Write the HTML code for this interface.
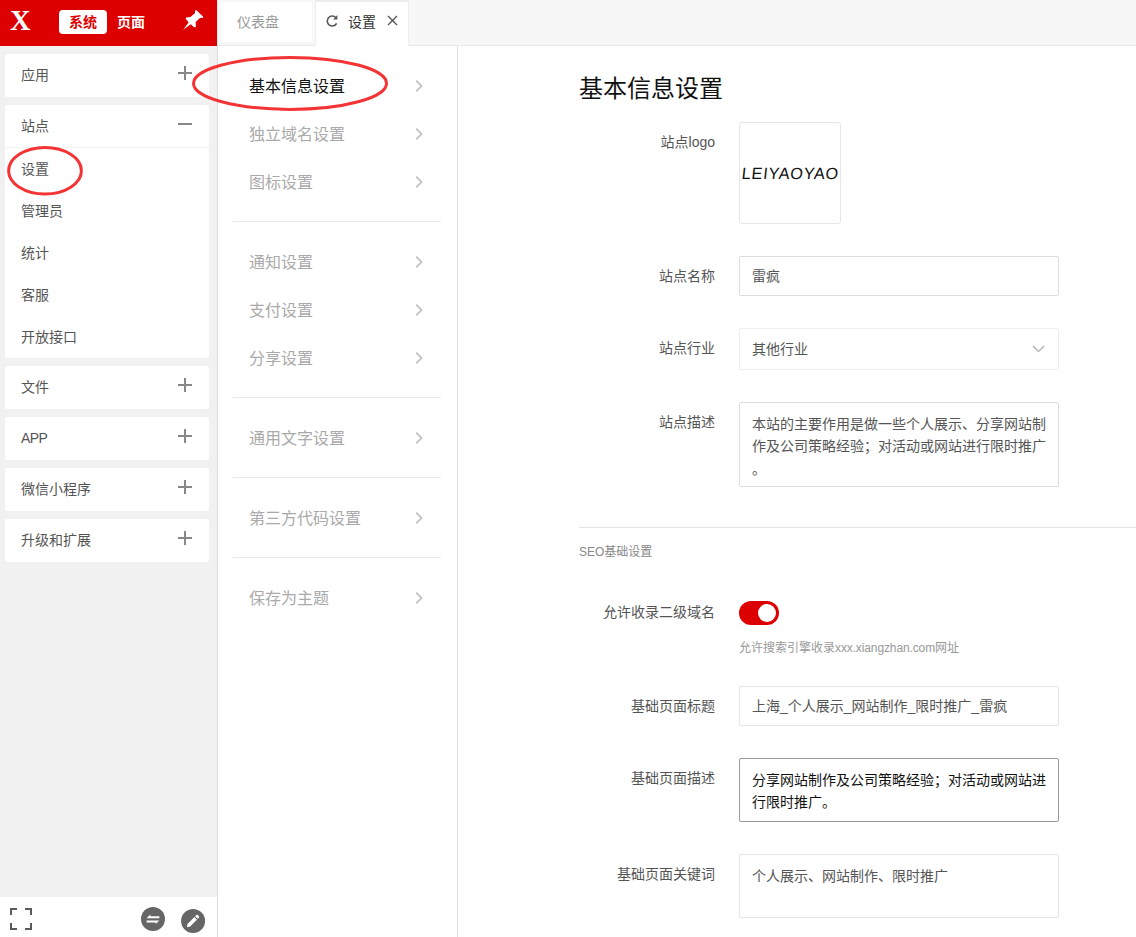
<!DOCTYPE html>
<html lang="zh-CN">
<head>
<meta charset="utf-8">
<title>设置</title>
<style>
*{box-sizing:border-box;margin:0;padding:0}
html,body{width:1136px;height:937px;overflow:hidden;background:#fff}
body{font-family:"Liberation Sans","Noto Sans CJK SC",sans-serif;font-size:14px;color:#555;position:relative}
.abs{position:absolute}
/* sidebar */
#side{position:absolute;left:0;top:0;width:218px;height:937px;background:#f1f1f1;border-right:1px solid #dcdcdc}
#hdr{position:absolute;left:0;top:0;width:217px;height:46px;background:#dc0000}
#logo{position:absolute;left:10px;top:0;font-family:"Liberation Serif",serif;font-weight:bold;font-size:30px;line-height:40px;color:#fff;transform:scaleX(.95);transform-origin:0 0}
#sys{position:absolute;left:59px;top:10px;width:48px;height:24px;background:#fff;border-radius:4px;color:#dc0000;font-weight:bold;font-size:14px;line-height:24px;text-align:center}
#pg{position:absolute;left:117px;top:10px;color:#fff;font-weight:bold;font-size:14px;line-height:24px}
.card{position:absolute;left:5px;width:204px;background:#fff;border-radius:2px}
.card .t{position:absolute;left:16px;font-size:14px;line-height:20px;color:#555;white-space:nowrap}
.pm{position:absolute;left:173px;width:14px;height:14px}
.pm:before{content:"";position:absolute;left:0;top:6px;width:14px;height:2px;background:#888}
.pm.plus:after{content:"";position:absolute;left:6px;top:0;width:2px;height:14px;background:#888}
#foot{position:absolute;left:0;top:897px;width:217px;height:40px;background:#fff}
/* tabs */
#tabs{position:absolute;left:218px;top:0;width:918px;height:46px;background:#f7f7f7;border-bottom:1px solid #e8e8e8}
#tab1{position:absolute;left:3px;top:2px;width:91px;height:40px;background:#fff;color:#999;font-size:14px;line-height:40px;padding-left:16px}
#tab2{position:absolute;left:97px;top:2px;width:94px;height:45px;background:#fff;color:#333;font-size:14px;line-height:42px;border-left:1px solid #eee;border-right:1px solid #eee}
/* menu */
#menu{position:absolute;left:218px;top:46px;width:240px;height:891px;background:#fff;border-right:1px solid #e0e0e0}
.mi{position:absolute;left:31px;font-size:16px;line-height:24px;color:#aaa;white-space:nowrap}
.mi.on{color:#111}
.chev{position:absolute;left:196px;width:9px;height:14px}
.hr{position:absolute;left:15px;width:208px;height:1px;background:#e8e8e8}
/* content */
h1{position:absolute;left:579px;top:71px;font-size:24px;line-height:36px;font-weight:normal;color:#111;white-space:nowrap}
.lb{position:absolute;right:421px;font-size:14px;line-height:20px;color:#555;white-space:nowrap}
.inp{position:absolute;left:739px;width:320px;border:1px solid #ddd;border-radius:2px;background:#fff;padding:0 12px;font-size:14px;color:#555;line-height:38px;white-space:nowrap}
.ta{line-height:22.400px;padding:10px 12px;white-space:nowrap;overflow:hidden}
</style>
</head>
<body>
<div id="side">
  <div id="hdr">
    <div id="logo">X</div>
    <div id="sys">系统</div>
    <div id="pg">页面</div>
    <svg class="abs" style="left:176px;top:4px" width="36" height="32" viewBox="176 4 36 32"><path d="M196.200 10 L203.200 16.800 L203 17.800 L199.900 18 L195.700 22.100 L195.900 26.900 L194.100 27.300 L190.700 24.200 L183.200 29.800 L188.600 22.400 L185.600 18.600 L186.200 17.400 L190.300 17.100 L194.900 13.200 L195.200 10.600 Z" fill="#fff"/></svg>
  </div>

  <div class="card" style="top:54px;height:43px"><span class="t" style="top:11px">应用</span><i class="pm plus" style="top:12px"></i></div>

  <div class="card" style="top:105px;height:253px">
    <span class="t" style="top:11px">站点</span><i class="pm" style="top:12px"></i>
    <div class="abs" style="left:0;top:42px;width:204px;height:1px;background:#f3f3f3"></div>
    <span class="t" style="top:54px">设置</span>
    <span class="t" style="top:96px">管理员</span>
    <span class="t" style="top:138px">统计</span>
    <span class="t" style="top:180px">客服</span>
    <span class="t" style="top:222px">开放接口</span>
  </div>

  <div class="card" style="top:366px;height:43px"><span class="t" style="top:11px">文件</span><i class="pm plus" style="top:12px"></i></div>
  <div class="card" style="top:417px;height:43px"><span class="t" style="top:11px;letter-spacing:-.6px">APP</span><i class="pm plus" style="top:12px"></i></div>
  <div class="card" style="top:468px;height:43px"><span class="t" style="top:11px">微信小程序</span><i class="pm plus" style="top:12px"></i></div>
  <div class="card" style="top:519px;height:43px"><span class="t" style="top:11px">升级和扩展</span><i class="pm plus" style="top:12px"></i></div>

  <div id="foot">
    <svg class="abs" style="left:0;top:0" width="217" height="40" viewBox="0 897 217 40">
      <path d="M11 915V909h6M25 909h6v6M31 923v6h-6M17 929H11v-6" fill="none" stroke="#5a5a5a" stroke-width="2"/>
      <circle cx="153" cy="919" r="12" fill="#666"/>
      <path d="M146.600 918.200L150.300 914.400V916.200H159.400V918.200zM159.400 920.400L155.700 924.100V922.400H146.600V920.400z" fill="#fff"/>
      <circle cx="193.100" cy="920.900" r="12" fill="#666"/>
      <g transform="translate(193.100 920.900) rotate(-45)" fill="#fff"><path d="M-8.600 0L-6.400 -1.800H3.600V1.800H-6.400zM4.700 -1.800H6.400a1 1 0 0 1 1 1V.8a1 1 0 0 1 -1 1H4.700z"/></g>
    </svg>
  </div>
</div>

<div class="abs" style="left:217px;top:0;width:1px;height:46px;background:#ececec"></div>
<div id="tabs">
  <div id="tab1">仪表盘</div>
  <div class="abs" style="left:97px;top:0;width:94px;height:2px;background:#ededed"></div>
  <div id="tab2">
    <svg class="abs" style="left:9px;top:12px" width="14" height="14" viewBox="0 0 13 13" fill="none" stroke="#555" stroke-width="1.500"><path d="M10.800 8.600A4.600 4.600 0 1 1 10.200 3.500"/><path d="M11.500 1v4h-4z" fill="#555" stroke="none"/></svg>
    <span class="abs" style="left:32px;top:-1px">设置</span>
    <svg class="abs" style="left:71px;top:13px" width="11" height="11" viewBox="0 0 11 11" stroke="#555" stroke-width="1.400"><path d="M1 1l9 9M10 1l-9 9"/></svg>
  </div>
</div>

<div id="menu">
  <span class="mi on" style="top:29px">基本信息设置</span><svg class="chev" style="top:33px" viewBox="0 0 9 14" fill="none" stroke="#bdbdbd" stroke-width="1.600"><path d="M2.200 1.600l5.300 5.400-5.300 5.400"/></svg>
  <span class="mi" style="top:77px">独立域名设置</span><svg class="chev" style="top:81px" viewBox="0 0 9 14" fill="none" stroke="#bdbdbd" stroke-width="1.600"><path d="M2.200 1.600l5.300 5.400-5.300 5.400"/></svg>
  <span class="mi" style="top:125px">图标设置</span><svg class="chev" style="top:129px" viewBox="0 0 9 14" fill="none" stroke="#bdbdbd" stroke-width="1.600"><path d="M2.200 1.600l5.300 5.400-5.300 5.400"/></svg>
  <div class="hr" style="top:175px"></div>
  <span class="mi" style="top:205px">通知设置</span><svg class="chev" style="top:209px" viewBox="0 0 9 14" fill="none" stroke="#bdbdbd" stroke-width="1.600"><path d="M2.200 1.600l5.300 5.400-5.300 5.400"/></svg>
  <span class="mi" style="top:253px">支付设置</span><svg class="chev" style="top:257px" viewBox="0 0 9 14" fill="none" stroke="#bdbdbd" stroke-width="1.600"><path d="M2.200 1.600l5.300 5.400-5.300 5.400"/></svg>
  <span class="mi" style="top:301px">分享设置</span><svg class="chev" style="top:305px" viewBox="0 0 9 14" fill="none" stroke="#bdbdbd" stroke-width="1.600"><path d="M2.200 1.600l5.300 5.400-5.300 5.400"/></svg>
  <div class="hr" style="top:351px"></div>
  <span class="mi" style="top:381px">通用文字设置</span><svg class="chev" style="top:385px" viewBox="0 0 9 14" fill="none" stroke="#bdbdbd" stroke-width="1.600"><path d="M2.200 1.600l5.300 5.400-5.300 5.400"/></svg>
  <div class="hr" style="top:431px"></div>
  <span class="mi" style="top:461px">第三方代码设置</span><svg class="chev" style="top:465px" viewBox="0 0 9 14" fill="none" stroke="#bdbdbd" stroke-width="1.600"><path d="M2.200 1.600l5.300 5.400-5.300 5.400"/></svg>
  <div class="hr" style="top:511px"></div>
  <span class="mi" style="top:541px">保存为主题</span><svg class="chev" style="top:545px" viewBox="0 0 9 14" fill="none" stroke="#bdbdbd" stroke-width="1.600"><path d="M2.200 1.600l5.300 5.400-5.300 5.400"/></svg>
</div>

<h1>基本信息设置</h1>

<span class="lb" style="top:132px">站点logo</span>
<div class="abs" style="left:739px;top:122px;width:102px;height:102px;border:1px solid #e6e6e6;border-radius:3px"></div>
<span class="abs" style="left:742px;top:162px;font-family:'Liberation Sans',sans-serif;font-size:16.200px;line-height:22px;color:#111;white-space:nowrap;letter-spacing:.75px;transform:skewX(-6deg)">LEIYAOYAO</span>

<span class="lb" style="top:266px">站点名称</span>
<div class="inp" style="top:256px;height:40px">雷疯</div>

<span class="lb" style="top:338px">站点行业</span>
<div class="inp" style="top:328px;height:42px;line-height:41px;border-color:#eee">其他行业</div>
<svg class="abs" style="left:1032px;top:345px" width="13" height="8" viewBox="0 0 13 8" fill="none" stroke="#bbb" stroke-width="1.600"><path d="M1 1.200l5.500 5.300L12 1.200"/></svg>

<span class="lb" style="top:412px">站点描述</span>
<div class="inp ta" style="top:402px;height:85px">本站的主要作用是做一些个人展示、分享网站制<br>作及公司策略经验；对活动或网站进行限时推广<br>。</div>

<div class="abs" style="left:579px;top:527px;width:557px;height:1px;background:#e4e4e4"></div>
<span class="abs" style="left:579px;top:543px;font-size:12px;line-height:18px;color:#888;white-space:nowrap">SEO基础设置</span>

<span class="lb" style="top:602px">允许收录二级域名</span>
<div class="abs" style="left:739px;top:601px;width:40px;height:24px;border-radius:12px;background:#dc0000"></div>
<div class="abs" style="left:758px;top:604px;width:18px;height:18px;border-radius:50%;background:#fff"></div>
<span class="abs" style="left:739px;top:639px;font-size:12px;line-height:18px;color:#999;white-space:nowrap">允许搜索引擎收录<span style="letter-spacing:-.12px">xxx.xiangzhan.com</span>网址</span>

<span class="lb" style="top:696px">基础页面标题</span>
<div class="inp" style="top:686px;height:40px;border-color:#e6e6e6">上海_个人展示_网站制作_限时推广_雷疯</div>

<span class="lb" style="top:768px">基础页面描述</span>
<div class="inp ta" style="top:758px;height:64px;border-color:#999;color:#111">分享网站制作及公司策略经验；对活动或网站进<br>行限时推广。</div>

<span class="lb" style="top:864px">基础页面关键词</span>
<div class="inp ta" style="top:854px;height:64px;border-color:#e6e6e6">个人展示、网站制作、限时推广</div>

<!-- red annotation ellipses -->
<svg class="abs" style="left:0;top:0;pointer-events:none" width="1136" height="937" viewBox="0 0 1136 937" fill="none" stroke="#f43434" stroke-width="3">
  <ellipse cx="290" cy="83.400" rx="96.500" ry="26"/>
  <ellipse cx="45" cy="170.800" rx="36.400" ry="23.300"/>
</svg>
</body>
</html>
